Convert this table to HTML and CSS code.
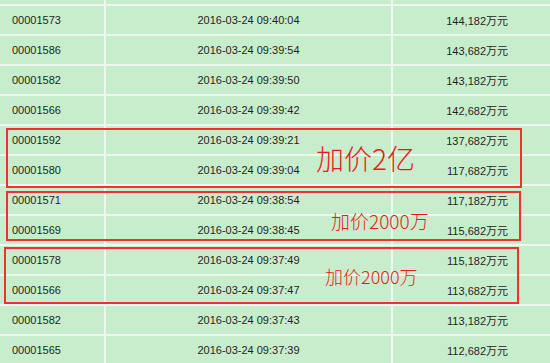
FILE: index.html
```html
<!DOCTYPE html>
<html lang="zh-CN">
<head>
<meta charset="utf-8">
<title>出价记录</title>
<link rel="stylesheet" href="styles.css">
</head>
<body>
<div class="sheet">
  <div class="row row-top"><div class="cell"></div><div class="cell"></div><div class="cell"></div></div>
  <div class="row"><div class="cell c-id">00001573</div><div class="cell c-time">2016-03-24 09:40:04</div><div class="cell c-price">144,182万元</div></div>
  <div class="row"><div class="cell c-id">00001586</div><div class="cell c-time">2016-03-24 09:39:54</div><div class="cell c-price">143,682万元</div></div>
  <div class="row"><div class="cell c-id">00001582</div><div class="cell c-time">2016-03-24 09:39:50</div><div class="cell c-price">143,182万元</div></div>
  <div class="row"><div class="cell c-id">00001566</div><div class="cell c-time">2016-03-24 09:39:42</div><div class="cell c-price">142,682万元</div></div>
  <div class="row"><div class="cell c-id">00001592</div><div class="cell c-time">2016-03-24 09:39:21</div><div class="cell c-price">137,682万元</div></div>
  <div class="row"><div class="cell c-id">00001580</div><div class="cell c-time">2016-03-24 09:39:04</div><div class="cell c-price">117,682万元</div></div>
  <div class="row"><div class="cell c-id">00001571</div><div class="cell c-time">2016-03-24 09:38:54</div><div class="cell c-price">117,182万元</div></div>
  <div class="row"><div class="cell c-id">00001569</div><div class="cell c-time">2016-03-24 09:38:45</div><div class="cell c-price">115,682万元</div></div>
  <div class="row"><div class="cell c-id">00001578</div><div class="cell c-time">2016-03-24 09:37:49</div><div class="cell c-price">115,182万元</div></div>
  <div class="row"><div class="cell c-id">00001566</div><div class="cell c-time">2016-03-24 09:37:47</div><div class="cell c-price">113,682万元</div></div>
  <div class="row"><div class="cell c-id">00001582</div><div class="cell c-time">2016-03-24 09:37:43</div><div class="cell c-price">113,182万元</div></div>
  <div class="row"><div class="cell c-id">00001565</div><div class="cell c-time">2016-03-24 09:37:39</div><div class="cell c-price">112,682万元</div></div>

  <div class="mark mark-1"><span class="note note-1">加价2亿</span></div>
  <div class="mark mark-2"><span class="note note-2">加价2000万</span></div>
  <div class="mark mark-3"><span class="note note-3">加价2000万</span></div>
</div>
</body>
</html>
```

FILE: styles.css
```css
html, body {
  margin: 0;
  padding: 0;
  background: #c8edcc;
  overflow: hidden;
}

.sheet {
  position: relative;
  width: 550px;
  height: 363px;
  background: #eef8ef;
  display: flex;
  flex-direction: column;
  gap: 2px;
  font-family: "Liberation Sans", "Noto Sans CJK SC", sans-serif;
  font-size: 11px;
  color: #1f1f1f;
}

.row {
  display: grid;
  grid-template-columns: 104px 285px 1fr;
  column-gap: 2px;
  height: 28px;
  flex: none;
}

.row-top {
  height: 4px;
}

.cell {
  background: #c8edcc;
  display: flex;
  align-items: center;
  white-space: nowrap;
}

.c-id {
  padding-left: 12px;
}

.c-time {
  justify-content: center;
}

.c-price {
  justify-content: flex-end;
  padding-right: 42px;
}

.mark {
  position: absolute;
  border: 2px solid #f23030;
  display: flex;
  align-items: center;
  box-sizing: border-box;
}

.mark-1 { left: 6px; top: 128px; width: 516px; height: 60px; }
.mark-2 { left: 6px; top: 191px; width: 515px; height: 50px; }
.mark-3 { left: 4px; top: 247px; width: 515px; height: 57px; }

.note {
  font-family: "Noto Sans CJK SC", "Liberation Sans", sans-serif;
  font-weight: 300;
  color: #e81b1b;
  line-height: 1;
  white-space: nowrap;
}

.note-1 { font-size: 28px; margin-left: 308px; }
.note-2 { font-size: 19px; margin-left: 323px; margin-top: 8px; }
.note-3 { font-size: 18px; margin-left: 319px; }
```
